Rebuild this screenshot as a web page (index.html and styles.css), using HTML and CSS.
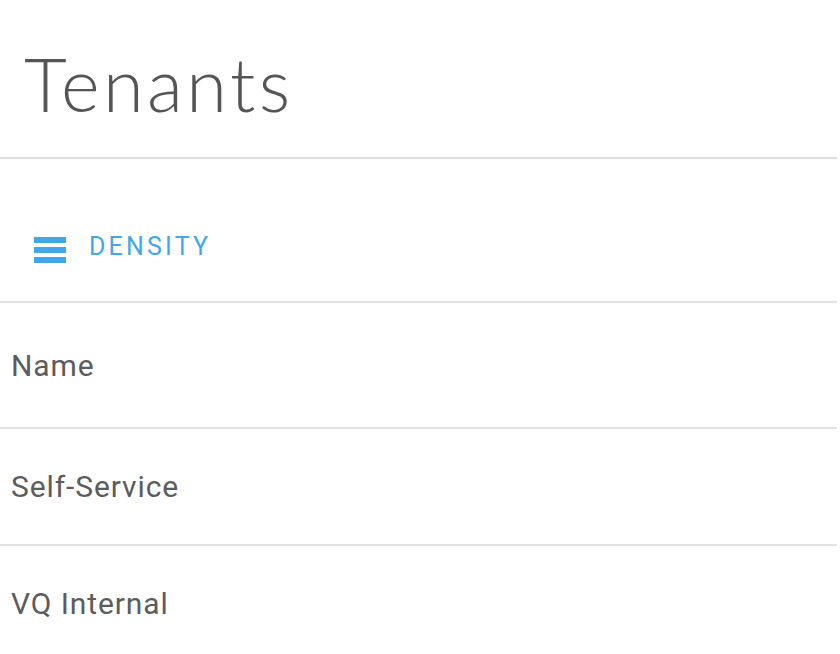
FILE: index.html
```html
<!DOCTYPE html>
<html lang="en">
<head>
    <meta charset="UTF-8">
    <meta name="viewport" content="width=device-width, initial-scale=1.0">
    <title>Tenants</title>
    <link rel="stylesheet" href="styles.css">
</head>
<body>
    <div class="page">
        <header class="page-header">
            <h1>Tenants</h1>
        </header>

        <div class="toolbar">
            <button class="density-btn">
                <svg class="density-icon" width="32" height="26" viewBox="0 0 32 26">
                    <rect x="0" y="0" width="32" height="6" fill="currentColor"/>
                    <rect x="0" y="10" width="32" height="6" fill="currentColor"/>
                    <rect x="0" y="20" width="32" height="6" fill="currentColor"/>
                </svg>
                <span>Density</span>
            </button>
        </div>

        <div class="grid">
            <div class="row head">Name</div>
            <div class="row">Self-Service</div>
            <div class="row">VQ Internal</div>
        </div>
    </div>
</body>
</html>
```

FILE: styles.css
```css
body {
    margin: 0;
    background-color: #fff;
    font-family: Roboto, "Liberation Sans", sans-serif;
    color: #555;
}
.page {
    width: 837px;
    overflow: hidden;
}
.page-header {
    height: 157px;
    border-bottom: 2px solid #ddd;
}
h1 {
    margin: 0;
    padding: 40px 0 0 24px;
    font-family: Lato, "Open Sans", sans-serif;
    font-weight: 300;
    font-size: 74px;
    line-height: 88px;
    letter-spacing: 3.4px;
    color: #555;
}
.toolbar {
    height: 110px;
    padding: 32px 0 0 34px;
    border-bottom: 2px solid #e2e2e2;
    display: flex;
    align-items: center;
}
.density-btn {
    display: flex;
    align-items: center;
    gap: 23px;
    padding: 0;
    border: none;
    background: none;
    color: #42a6ea;
    font-family: Roboto, sans-serif;
    font-weight: 400;
    font-size: 25px;
    letter-spacing: 3.2px;
    text-transform: uppercase;
    cursor: pointer;
}
.density-icon {
    margin-top: 8px;
}
.row {
    height: 115px;
    border-bottom: 2px solid #e2e2e2;
    display: flex;
    align-items: center;
    padding-left: 11px;
    font-size: 30px;
    letter-spacing: 0.9px;
    color: #5c5c5c;
}
.row.head {
    height: 124px;
}
```
